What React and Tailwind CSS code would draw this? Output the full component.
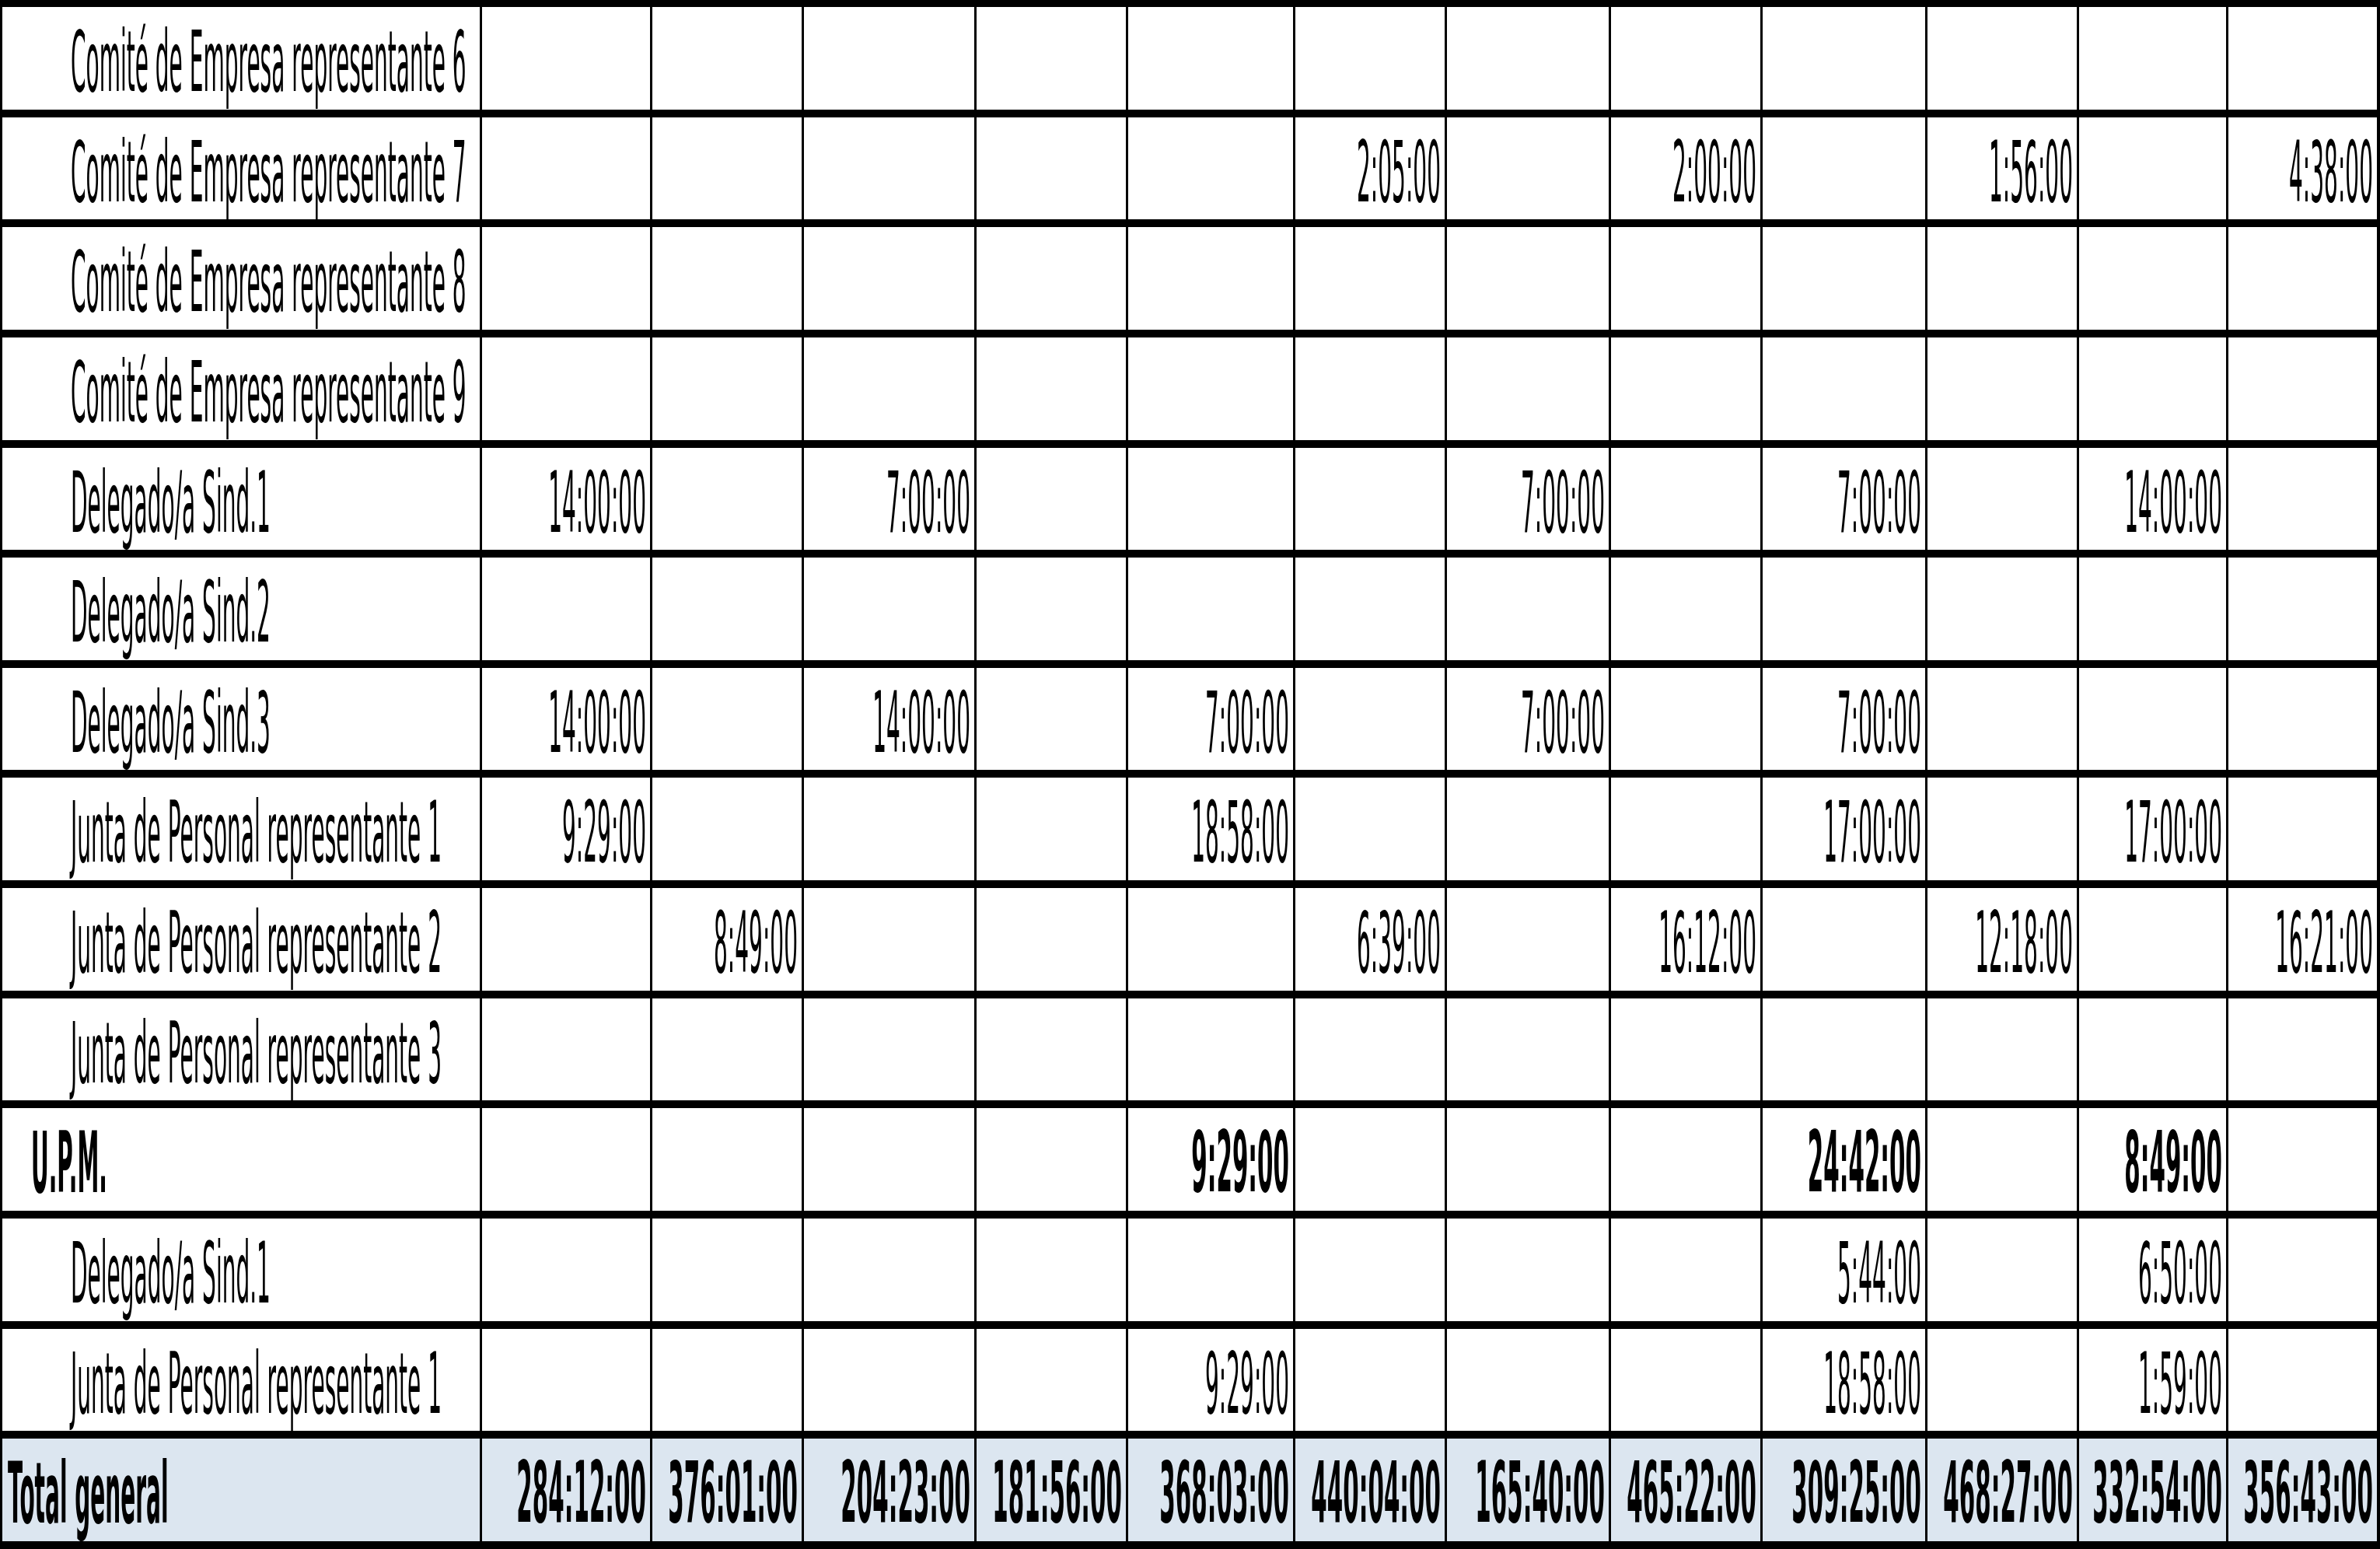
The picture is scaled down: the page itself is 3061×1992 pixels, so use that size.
import React from "react";

const E = "";
const rows = [
  { label: "Comité de Empresa representante 6", kind: "child", v: [E, E, E, E, E, E, E, E, E, E, E, E] },
  { label: "Comité de Empresa representante 7", kind: "child", v: [E, E, E, E, E, "2:05:00", E, "2:00:00", E, "1:56:00", E, "4:38:00"] },
  { label: "Comité de Empresa representante 8", kind: "child", v: [E, E, E, E, E, E, E, E, E, E, E, E] },
  { label: "Comité de Empresa representante 9", kind: "child", v: [E, E, E, E, E, E, E, E, E, E, E, E] },
  { label: "Delegado/a Sind.1", kind: "child", v: ["14:00:00", E, "7:00:00", E, E, E, "7:00:00", E, "7:00:00", E, "14:00:00", E] },
  { label: "Delegado/a Sind.2", kind: "child", v: [E, E, E, E, E, E, E, E, E, E, E, E] },
  { label: "Delegado/a Sind.3", kind: "child", v: ["14:00:00", E, "14:00:00", E, "7:00:00", E, "7:00:00", E, "7:00:00", E, E, E] },
  { label: "Junta de Personal representante 1", kind: "child", v: ["9:29:00", E, E, E, "18:58:00", E, E, E, "17:00:00", E, "17:00:00", E] },
  { label: "Junta de Personal representante 2", kind: "child", v: [E, "8:49:00", E, E, E, "6:39:00", E, "16:12:00", E, "12:18:00", E, "16:21:00"] },
  { label: "Junta de Personal representante 3", kind: "child", v: [E, E, E, E, E, E, E, E, E, E, E, E] },
  { label: "U.P.M.", kind: "group", v: [E, E, E, E, "9:29:00", E, E, E, "24:42:00", E, "8:49:00", E] },
  { label: "Delegado/a Sind.1", kind: "child", v: [E, E, E, E, E, E, E, E, "5:44:00", E, "6:50:00", E] },
  { label: "Junta de Personal representante 1", kind: "child", v: [E, E, E, E, "9:29:00", E, E, E, "18:58:00", E, "1:59:00", E] },
  {
    label: "Total general",
    kind: "total",
    v: ["284:12:00", "376:01:00", "204:23:00", "181:56:00", "368:03:00", "440:04:00", "165:40:00", "465:22:00", "309:25:00", "468:27:00", "332:54:00", "356:43:00"],
  },
];

/* Text is drawn at a small font size and stretched vertically, so that the
   layout box has the same width as the visible (very condensed) glyphs. */
const REG = "text-[28px] leading-[28px] [transform:scaleY(3.893)]";
const BOLD_LABEL = "text-[28px] leading-[28px] [transform:scaleY(3.893)] font-bold";
const BOLD_NUM = "text-[29.4px] leading-[29.4px] [transform:scaleY(3.707)] font-bold";

function Row({ row }) {
  const bold = row.kind !== "child";
  const labelPad =
    row.kind === "child" ? "pl-[88px]" : row.kind === "group" ? "pl-[37px]" : "pl-[7px]";
  return (
    <div
      className={
        "grid grid-cols-[614px_219px_195px_222px_195px_215px_195px_211px_195px_212px_195px_192px_194px] flex-1 min-h-0 border-b-[10px] border-black " +
        (row.kind === "total" ? "bg-[#dce6f0]" : "bg-white")
      }
    >
      <div className={"flex justify-start items-start pt-[18px] " + labelPad}>
        <span
          className={
            "inline-block shrink-0 whitespace-nowrap origin-top text-black " +
            (bold ? BOLD_LABEL : REG)
          }
        >
          {row.label}
        </span>
      </div>
      {row.v.map((val, i) => (
        <div
          key={i}
          className="border-l-[3px] border-black flex justify-end items-start pt-[18px] pr-[5px]"
        >
          {val ? (
            <span
              className={
                "inline-block shrink-0 whitespace-nowrap origin-top text-black " +
                (bold ? BOLD_NUM : REG)
              }
            >
              {val}
            </span>
          ) : null}
        </div>
      ))}
    </div>
  );
}

export default function App() {
  return (
    <div className="w-[3061px] h-[1992px] bg-white overflow-hidden font-['DejaVu_Sans',sans-serif]">
      <div className="w-full h-full flex flex-col border-t-[9px] border-l-[3px] border-r-[4px] border-black">
        {rows.map((r, i) => (
          <Row key={i} row={r} />
        ))}
      </div>
    </div>
  );
}
